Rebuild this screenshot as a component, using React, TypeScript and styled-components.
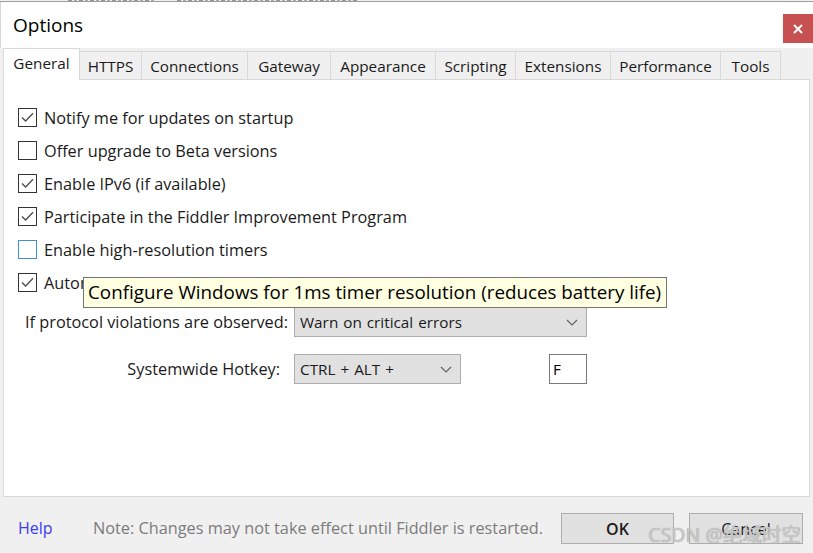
import React from "react";
import styled, { createGlobalStyle } from "styled-components";

const Global = createGlobalStyle`
  html, body { margin: 0; padding: 0; width: 813px; height: 553px; overflow: hidden; background: #f0f0f0; }
  body { font-family: "Open Sans", "Noto Sans", sans-serif; color: #111; }
  * { box-sizing: border-box; }
`;

const Window = styled.div`
  position: relative;
  width: 813px;
  height: 553px;
  display: flex;
  flex-direction: column;
  background: #f0f0f0;
  overflow: hidden;
`;

const Backdrop = styled.div`
  flex: none;
  height: 2px;
  background: #f2f2f2;
  border-bottom: 1px solid #9c9c9c;
  display: flex;
  align-items: flex-start;
`;

const Fragment = styled.div<{ $left: number; $w: number }>`
  margin-left: ${(p) => p.$left}px;
  width: ${(p) => p.$w}px;
  height: 1px;
  opacity: 0.6;
  background: repeating-linear-gradient(90deg, #555 0 4px, transparent 4px 6px, #777 6px 9px, transparent 9px 11px);
`;

const TitleBar = styled.div`
  flex: none;
  height: 46px;
  background: #ffffff;
  border-left: 1px solid #d6d6d6;
  display: flex;
  justify-content: space-between;
  align-items: flex-start;
  padding-left: 12px;
`;

const Title = styled.div`
  font-size: 19px;
  line-height: 46px;
  color: #000;
`;

const CloseButton = styled.div`
  margin-top: 12px;
  width: 30px;
  height: 29px;
  background: #c75050;
  display: flex;
  align-items: center;
  justify-content: center;
`;

const TabStrip = styled.div`
  flex: none;
  height: 31px;
  display: flex;
  align-items: flex-end;
  padding: 0 3px;
  position: relative;
  z-index: 2;
`;

const Tab = styled.div<{ $w: number; $active?: boolean }>`
  width: ${(p) => p.$w}px;
  height: ${(p) => (p.$active ? 32 : 28)}px;
  margin-bottom: ${(p) => (p.$active ? -1 : 0)}px;
  margin-left: -1px;
  &:first-child { margin-left: 0; }
  position: relative;
  z-index: ${(p) => (p.$active ? 2 : 1)};
  background: ${(p) => (p.$active ? "#ffffff" : "#f0f0f0")};
  border: 1px solid #d9d9d9;
  border-bottom: none;
  display: flex;
  align-items: center;
  justify-content: center;
  padding-bottom: ${(p) => (p.$active ? 3 : 0)}px;
  font-size: 15.3px;
  color: #1a1a1a;
  white-space: nowrap;
`;

const Panel = styled.div`
  flex: 1;
  margin: 0 3px;
  background: #ffffff;
  border: 1px solid #d9d9d9;
  padding: 21px 0 0 14px;
  display: flex;
  flex-direction: column;
`;

const CheckRow = styled.div`
  height: 33px;
  display: flex;
  align-items: center;
  gap: 7px;
  font-size: 16.3px;
  color: #1a1a1a;
  white-space: nowrap;
`;

const Box = styled.div<{ $hover?: boolean }>`
  width: 19px;
  height: 19px;
  flex: none;
  background: #fff;
  border: 1px solid ${(p) => (p.$hover ? "#3d8fd6" : "#333333")};
  display: flex;
  align-items: center;
  justify-content: center;
`;

const FormRow = styled.div<{ $top: number }>`
  margin-top: ${(p) => p.$top}px;
  margin-left: -14px;
  height: 30px;
  display: flex;
  align-items: center;
`;

const FieldLabel = styled.div<{ $pad: number }>`
  width: 290px;
  padding-right: ${(p) => p.$pad}px;
  text-align: right;
  font-size: 16.3px;
  color: #1a1a1a;
  white-space: nowrap;
`;

const Select = styled.div<{ $w: number }>`
  width: ${(p) => p.$w}px;
  height: 30px;
  background: #e1e1e1;
  border: 1px solid #adadad;
  display: flex;
  align-items: center;
  justify-content: space-between;
  padding: 0 8px 0 5px;
  font-size: 15.3px;
  word-spacing: 1px;
  color: #1a1a1a;
  white-space: nowrap;
`;

const TextBox = styled.div`
  margin-left: 88px;
  width: 38px;
  height: 30px;
  background: #fff;
  border: 1px solid #7a7a7a;
  padding-left: 3px;
  display: flex;
  align-items: center;
  font-size: 15.3px;
  color: #000;
`;

const Tooltip = styled.div`
  position: absolute;
  left: 83px;
  top: 277px;
  width: 584px;
  height: 31px;
  background: #ffffe1;
  border: 1px solid #767676;
  padding-left: 4px;
  font-size: 18.8px;
  line-height: 29px;
  color: #000;
  white-space: nowrap;
  z-index: 5;
`;

const Footer = styled.div`
  flex: none;
  height: 56px;
  display: flex;
  align-items: flex-start;
  padding: 16px 10px 0 18px;
`;

const HelpLink = styled.div`
  width: 75px;
  line-height: 31px;
  font-size: 16px;
  color: #3a3af0;
`;

const Note = styled.div`
  line-height: 31px;
  font-size: 16.3px;
  color: #7c7c7c;
  white-space: nowrap;
`;

const Button = styled.div<{ $w: number; $gap: number; $bold?: boolean }>`
  margin-left: ${(p) => p.$gap}px;
  width: ${(p) => p.$w}px;
  height: 31px;
  background: #e1e1e1;
  border: 1px solid #adadad;
  display: flex;
  align-items: center;
  justify-content: center;
  font-size: 16px;
  font-weight: ${(p) => (p.$bold ? 600 : 400)};
  color: #1a1a1a;
`;

const Spacer = styled.div`
  flex: 1;
`;

const Watermark = styled.div`
  position: absolute;
  right: 12px;
  bottom: 6px;
  font-family: "Noto Sans", "Noto Sans CJK SC", sans-serif;
  font-size: 19.5px;
  line-height: 24px;
  color: #c9c9c9;
  text-shadow: 0 0 1px #8c8c8c;
  white-space: nowrap;
  z-index: 6;
`;

const Check = () => (
  <svg width="15" height="15" viewBox="0 0 15 15">
    <polyline points="2,7.5 5.6,11 13,3.2" fill="none" stroke="#4a4a4a" strokeWidth="1.3" />
  </svg>
);

const Chevron = () => (
  <svg width="12" height="7" viewBox="0 0 12 7">
    <polyline points="1,1 6,6 11,1" fill="none" stroke="#606060" strokeWidth="1.1" />
  </svg>
);

const tabs: [string, number][] = [
  ["General", 77],
  ["HTTPS", 63],
  ["Connections", 107],
  ["Gateway", 84],
  ["Appearance", 106],
  ["Scripting", 81],
  ["Extensions", 96],
  ["Performance", 111],
  ["Tools", 61],
];

const checks: { label: string; checked: boolean; hover?: boolean }[] = [
  { label: "Notify me for updates on startup", checked: true },
  { label: "Offer upgrade to Beta versions", checked: false },
  { label: "Enable IPv6 (if available)", checked: true },
  { label: "Participate in the Fiddler Improvement Program", checked: true },
  { label: "Enable high-resolution timers", checked: false, hover: true },
  { label: "Automatically stream audio & video", checked: true },
];

export default function App() {
  return (
    <>
      <Global />
      <Window>
        <Backdrop>
          <Fragment $left={68} $w={86} />
          <Fragment $left={23} $w={180} />
        </Backdrop>
        <TitleBar>
          <Title>Options</Title>
          <CloseButton>
            <svg width="10" height="10" viewBox="0 0 10 10">
              <path d="M1 1 L9 9 M9 1 L1 9" stroke="#fff" strokeWidth="2" />
            </svg>
          </CloseButton>
        </TitleBar>
        <TabStrip>
          {tabs.map(([name, w], i) => (
            <Tab key={name} $w={w} $active={i === 0}>
              {name}
            </Tab>
          ))}
        </TabStrip>
        <Panel>
          {checks.map((c) => (
            <CheckRow key={c.label}>
              <Box $hover={c.hover}>{c.checked && <Check />}</Box>
              {c.label}
            </CheckRow>
          ))}
          <FormRow $top={8}>
            <FieldLabel $pad={6}>If protocol violations are observed:</FieldLabel>
            <Select $w={293}>
              Warn on critical errors
              <Chevron />
            </Select>
          </FormRow>
          <FormRow $top={17}>
            <FieldLabel $pad={14}>Systemwide Hotkey:</FieldLabel>
            <Select $w={167}>
              CTRL + ALT +
              <Chevron />
            </Select>
            <TextBox>F</TextBox>
          </FormRow>
        </Panel>
        <Footer>
          <HelpLink>Help</HelpLink>
          <Note>Note: Changes may not take effect until Fiddler is restarted.</Note>
          <Spacer />
          <Button $w={113} $gap={0} $bold>
            OK
          </Button>
          <Button $w={114} $gap={15}>
            Cancel
          </Button>
        </Footer>
        <Tooltip>Configure Windows for 1ms timer resolution (reduces battery life)</Tooltip>
        <Watermark>CSDN @绝域时空</Watermark>
      </Window>
    </>
  );
}
